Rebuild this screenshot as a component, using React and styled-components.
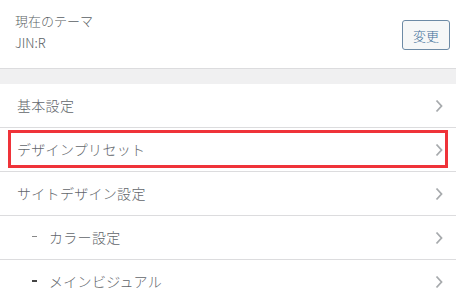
import React from 'react'
import { styled, createGlobalStyle } from 'styled-components'

const Global = createGlobalStyle`
  body {
    margin: 0;
    background: #fff;
    font-family: "Noto Sans CJK JP", "Noto Sans", sans-serif;
    color: #5f6368;
  }
`;

const Panel = styled.div`
  width: 456px;
  height: 299px;
  overflow: hidden;
  background: #fff;
`;

const Header = styled.div`
  height: 68px;
  display: flex;
  align-items: flex-start;
  justify-content: space-between;
  padding: 0 6px 0 15px;
  border-bottom: 1px solid #dcdcde;
`;

const ThemeInfo = styled.div`
  display: flex;
  flex-direction: column;
  padding-top: 10px;
  font-size: 13px;
  font-weight: 300;
  line-height: 22px;
  color: #5a5f64;
`;

const ChangeButton = styled.button`
  margin-top: 20px;
  width: 48px;
  height: 30px;
  font-family: inherit;
  font-size: 13px;
  font-weight: 300;
  color: #3f6f99;
  background: #f6f7f7;
  border: 1px solid #6d8aa5;
  border-radius: 3px;
  padding: 0;
`;

const Band = styled.div`
  height: 15px;
  background: #f0f0f1;
`;

const Row = styled.div`
  position: relative;
  height: 43px;
  display: flex;
  align-items: center;
  justify-content: space-between;
  padding: 0 12px 0 ${p => (p.$sub ? 32 : 17)}px;
  border-bottom: 1px solid #dcdcde;
  font-size: 14px;
  font-weight: 300;
  letter-spacing: 0.3px;
  color: #62666b;
`;

const Label = styled.span`
  display: flex;
  align-items: center;
  margin-top: -2px;
`;

const Dash = styled.span`
  width: 5px;
  height: ${p => (p.$bold ? 2 : 1)}px;
  background: ${p => (p.$bold ? '#444' : '#888')};
  margin-right: 12px;
`;

const Highlight = styled.div`
  position: absolute;
  top: 2px;
  bottom: 3px;
  left: 8px;
  right: 8px;
  border: 3px solid #ef3339;
  pointer-events: none;
`;

const Chevron = () => (
  <svg width="10" height="14" viewBox="0 0 10 14">
    <path d="M2.5 1.5 L7.5 7 L2.5 12.5" fill="none" stroke="#a7aaad" strokeWidth="1.8" />
  </svg>
);

const items = [
  { label: '基本設定' },
  { label: 'デザインプリセット', active: true },
  { label: 'サイトデザイン設定' },
  { label: 'カラー設定', sub: true },
  { label: 'メインビジュアル', sub: true, bold: true },
];

const App = () => {
  return (
    <Panel>
      <Global />
      <Header>
        <ThemeInfo>
          <span>現在のテーマ</span>
          <span>JIN:R</span>
        </ThemeInfo>
        <ChangeButton>変更</ChangeButton>
      </Header>
      <Band />
      {items.map(item => (
        <Row key={item.label} $sub={item.sub}>
          <Label>
            {item.sub && <Dash $bold={item.bold} />}
            {item.label}
          </Label>
          <Chevron />
          {item.active && <Highlight />}
        </Row>
      ))}
    </Panel>
  )
}

export default App
